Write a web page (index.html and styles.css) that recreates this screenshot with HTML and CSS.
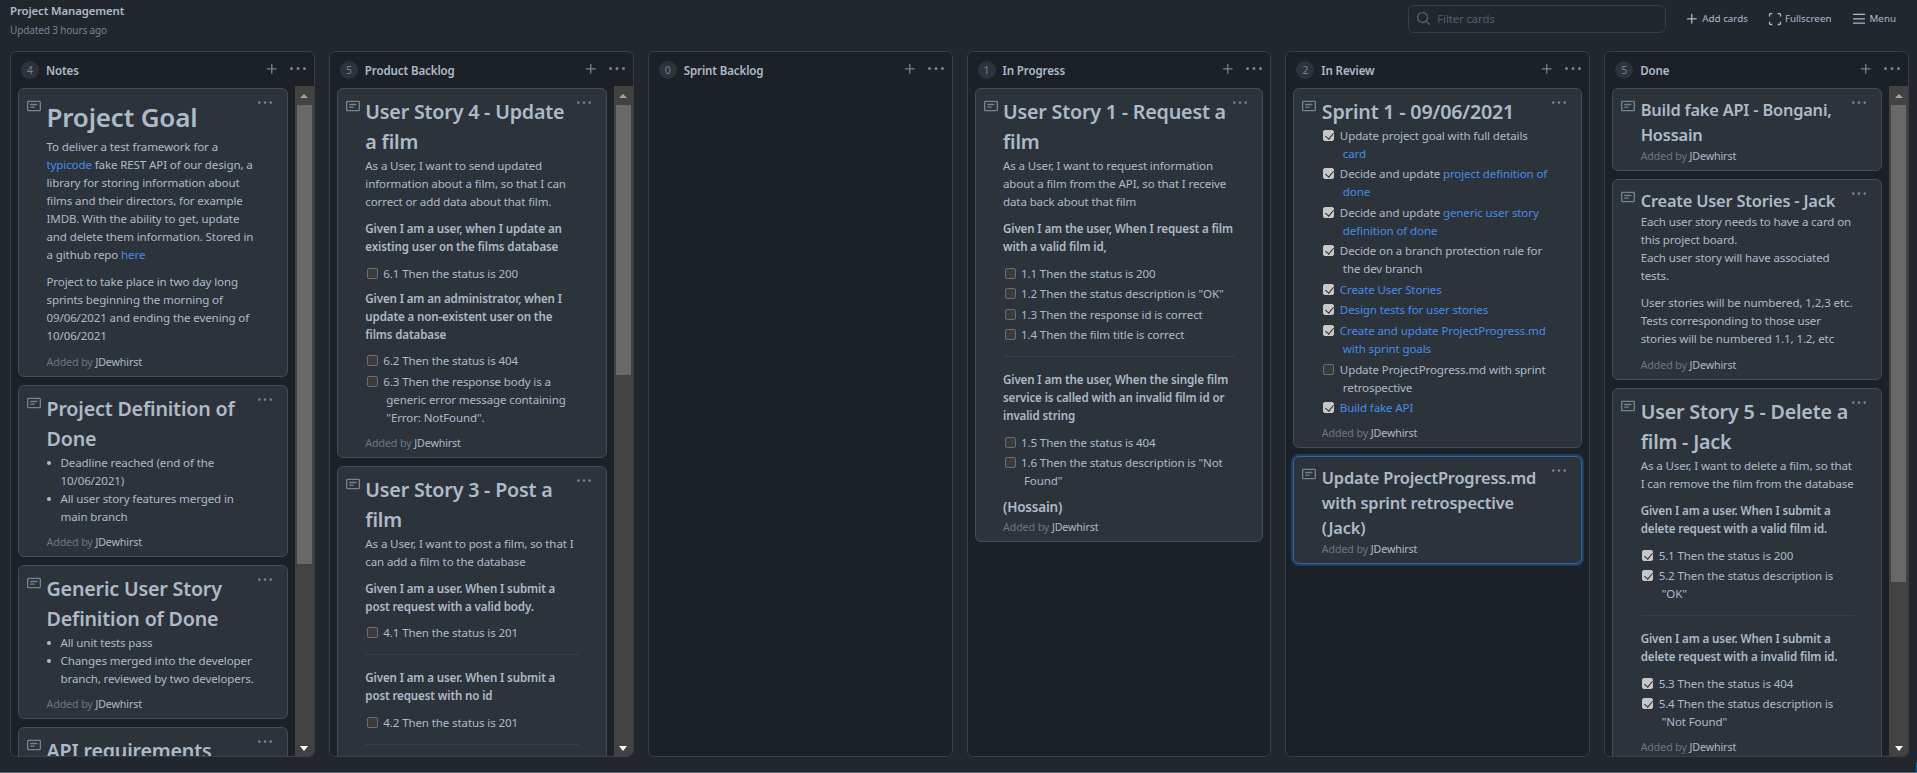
FILE: index.html
```html
<!DOCTYPE html>
<html lang="en">
<head>
<meta charset="utf-8">
<title>Project Management</title>
<link rel="stylesheet" href="styles.css">
</head>
<body>
<svg class="defs" width="0" height="0" aria-hidden="true">
  <symbol id="i-note" viewBox="0 0 16 16"><path fill-rule="evenodd" d="M0 3.75C0 2.784.784 2 1.75 2h12.5c.966 0 1.75.784 1.75 1.75v8.5A1.75 1.75 0 0114.25 14H1.75A1.75 1.75 0 010 12.25v-8.5zm1.75-.25a.25.25 0 00-.25.25v8.5c0 .138.112.25.25.25h12.5a.25.25 0 00.25-.25v-8.5a.25.25 0 00-.25-.25H1.75zM3.5 6.25a.75.75 0 01.75-.75h7a.75.75 0 010 1.5h-7a.75.75 0 01-.75-.75zm.75 2.25a.75.75 0 000 1.5h4a.75.75 0 000-1.5h-4z"/></symbol>
  <symbol id="i-plus" viewBox="0 0 16 16"><path fill-rule="evenodd" d="M7.75 2a.75.75 0 01.75.75V7h4.25a.75.75 0 110 1.5H8.5v4.25a.75.75 0 11-1.5 0V8.5H2.75a.75.75 0 010-1.5H7V2.75A.75.75 0 017.75 2z"/></symbol>
  <symbol id="i-kebab" viewBox="0 0 16 16"><path d="M8 9a1.5 1.5 0 100-3 1.5 1.5 0 000 3zM1.5 9a1.5 1.5 0 100-3 1.5 1.5 0 000 3zm13 0a1.5 1.5 0 100-3 1.5 1.5 0 000 3z"/></symbol>
  <symbol id="i-search" viewBox="0 0 16 16"><path fill-rule="evenodd" d="M11.5 7a4.499 4.499 0 11-8.998 0A4.499 4.499 0 0111.5 7zm-.82 4.74a6 6 0 111.06-1.06l3.04 3.04a.75.75 0 11-1.06 1.06l-3.04-3.04z"/></symbol>
  <symbol id="i-full" viewBox="0 0 16 16"><path d="M1 5V2.75C1 1.78 1.78 1 2.75 1H5v1.5H2.75a.25.25 0 00-.25.25V5H1zm10-4h2.25C14.22 1 15 1.78 15 2.75V5h-1.5V2.75a.25.25 0 00-.25-.25H11V1zM1 11h1.5v2.25c0 .14.11.25.25.25H5V15H2.75A1.75 1.75 0 011 13.25V11zm12.5 0H15v2.25A1.75 1.75 0 0113.25 15H11v-1.5h2.25a.25.25 0 00.25-.25V11z"/></symbol>
  <symbol id="i-bars" viewBox="0 0 16 16"><path fill-rule="evenodd" d="M1 2.75A.75.75 0 011.75 2h12.5a.75.75 0 110 1.5H1.75A.75.75 0 011 2.75zm0 5A.75.75 0 011.75 7h12.5a.75.75 0 110 1.5H1.75A.75.75 0 011 7.75zM1.75 12a.75.75 0 100 1.5h12.5a.75.75 0 100-1.5H1.75z"/></symbol>
</svg>

<header class="topbar">
  <div class="project">
    <div class="project-name">Project Management</div>
    <div class="project-updated">Updated 3 hours ago</div>
  </div>
  <div class="tools">
    <label class="filter">
      <svg class="ico ico-search"><use href="#i-search"/></svg>
      <span class="filter-text">Filter cards</span>
    </label>
    <a class="tool"><svg class="ico ico-add"><use href="#i-plus"/></svg>Add cards</a>
    <a class="tool"><svg class="ico ico-full"><use href="#i-full"/></svg>Fullscreen</a>
    <a class="tool"><svg class="ico ico-menu"><use href="#i-bars"/></svg>Menu</a>
  </div>
</header>

<main class="board">

  <section class="column">
    <header class="col-head">
      <span class="count">4</span><h2 class="col-title">Notes</h2>
      <svg class="ico col-add"><use href="#i-plus"/></svg><svg class="ico col-more"><use href="#i-kebab"/></svg>
    </header>
    <div class="col-body">
      <div class="cards">
        <article class="card">
          <svg class="ico card-note"><use href="#i-note"/></svg><svg class="ico card-more"><use href="#i-kebab"/></svg>
          <h1>Project Goal</h1>
          <p>To deliver a test framework for a <a>typicode</a> fake REST API of our design, a library for storing information about films and their directors, for example IMDB. With the ability to get, update and delete them information. Stored in a github repo <a>here</a></p>
          <p>Project to take place in two day long sprints beginning the morning of 09/06/2021 and ending the evening of 10/06/2021</p>
          <div class="added">Added by <b>JDewhirst</b></div>
        </article>
        <article class="card">
          <svg class="ico card-note"><use href="#i-note"/></svg><svg class="ico card-more"><use href="#i-kebab"/></svg>
          <h2>Project Definition of Done</h2>
          <ul class="bullets"><li>Deadline reached (end of the 10/06/2021)</li><li>All user story features merged in main branch</li></ul>
          <div class="added">Added by <b>JDewhirst</b></div>
        </article>
        <article class="card">
          <svg class="ico card-note"><use href="#i-note"/></svg><svg class="ico card-more"><use href="#i-kebab"/></svg>
          <h2>Generic User Story Definition of Done</h2>
          <ul class="bullets"><li>All unit tests pass</li><li>Changes merged into the developer branch, reviewed by two developers.</li></ul>
          <div class="added">Added by <b>JDewhirst</b></div>
        </article>
        <article class="card">
          <svg class="ico card-note"><use href="#i-note"/></svg><svg class="ico card-more"><use href="#i-kebab"/></svg>
          <h2>API requirements</h2>
        </article>
      </div>
      <div class="scrollbar"><span class="arrow-up"></span><span class="track"><span class="thumb thumb-notes"></span></span><span class="arrow-down"></span></div>
    </div>
  </section>

  <section class="column">
    <header class="col-head">
      <span class="count">5</span><h2 class="col-title">Product Backlog</h2>
      <svg class="ico col-add"><use href="#i-plus"/></svg><svg class="ico col-more"><use href="#i-kebab"/></svg>
    </header>
    <div class="col-body">
      <div class="cards">
        <article class="card">
          <svg class="ico card-note"><use href="#i-note"/></svg><svg class="ico card-more"><use href="#i-kebab"/></svg>
          <h2>User Story 4 - Update<br>a film</h2>
          <p>As a User, I want to send updated information about a film, so that I can correct or add data about that film.</p>
          <p><strong>Given I am a user, when I update an existing user on the films database</strong></p>
          <ul class="tasks"><li><input type="checkbox" disabled>6.1 Then the status is 200</li></ul>
          <p><strong>Given I am an administrator, when I update a non-existent user on the films database</strong></p>
          <ul class="tasks"><li><input type="checkbox" disabled>6.2 Then the status is 404</li><li><input type="checkbox" disabled>6.3 Then the response body is a generic error message containing "Error: NotFound".</li></ul>
          <div class="added">Added by <b>JDewhirst</b></div>
        </article>
        <article class="card">
          <svg class="ico card-note"><use href="#i-note"/></svg><svg class="ico card-more"><use href="#i-kebab"/></svg>
          <h2>User Story 3 - Post a film</h2>
          <p>As a User, I want to post a film, so that I can add a film to the database</p>
          <p><strong>Given I am a user. When I submit a post request with a valid body.</strong></p>
          <ul class="tasks"><li><input type="checkbox" disabled>4.1 Then the status is 201</li></ul>
          <hr>
          <p><strong>Given I am a user. When I submit a post request with no id</strong></p>
          <ul class="tasks"><li><input type="checkbox" disabled>4.2 Then the status is 201</li></ul>
          <hr>
        </article>
      </div>
      <div class="scrollbar"><span class="arrow-up"></span><span class="track"><span class="thumb thumb-backlog"></span></span><span class="arrow-down"></span></div>
    </div>
  </section>

  <section class="column">
    <header class="col-head">
      <span class="count">0</span><h2 class="col-title">Sprint Backlog</h2>
      <svg class="ico col-add"><use href="#i-plus"/></svg><svg class="ico col-more"><use href="#i-kebab"/></svg>
    </header>
    <div class="col-body"><div class="cards"></div></div>
  </section>

  <section class="column">
    <header class="col-head">
      <span class="count">1</span><h2 class="col-title">In Progress</h2>
      <svg class="ico col-add"><use href="#i-plus"/></svg><svg class="ico col-more"><use href="#i-kebab"/></svg>
    </header>
    <div class="col-body">
      <div class="cards">
        <article class="card">
          <svg class="ico card-note"><use href="#i-note"/></svg><svg class="ico card-more"><use href="#i-kebab"/></svg>
          <h2>User Story 1 - Request a film</h2>
          <p>As a User, I want to request information about a film from the API, so that I receive data back about that film</p>
          <p><strong>Given I am the user, When I request a film with a valid film id,</strong></p>
          <ul class="tasks"><li><input type="checkbox" disabled>1.1 Then the status is 200</li><li><input type="checkbox" disabled>1.2 Then the status description is "OK"</li><li><input type="checkbox" disabled>1.3 Then the response id is correct</li><li><input type="checkbox" disabled>1.4 Then the film title is correct</li></ul>
          <hr>
          <p><strong>Given I am the user, When the single film service is called with an invalid film id or invalid string</strong></p>
          <ul class="tasks"><li><input type="checkbox" disabled>1.5 Then the status is 404</li><li><input type="checkbox" disabled>1.6 Then the status description is "Not Found"</li></ul>
          <h4>(Hossain)</h4>
          <div class="added">Added by <b>JDewhirst</b></div>
        </article>
      </div>
    </div>
  </section>

  <section class="column">
    <header class="col-head">
      <span class="count">2</span><h2 class="col-title">In Review</h2>
      <svg class="ico col-add"><use href="#i-plus"/></svg><svg class="ico col-more"><use href="#i-kebab"/></svg>
    </header>
    <div class="col-body">
      <div class="cards">
        <article class="card">
          <svg class="ico card-note"><use href="#i-note"/></svg><svg class="ico card-more"><use href="#i-kebab"/></svg>
          <h2>Sprint 1 - 09/06/2021</h2>
          <ul class="tasks">
            <li><input type="checkbox" disabled checked>Update project goal with full details<br><a>card</a></li>
            <li><input type="checkbox" disabled checked>Decide and update <a>project definition of done</a></li>
            <li><input type="checkbox" disabled checked>Decide and update <a>generic user story definition of done</a></li>
            <li><input type="checkbox" disabled checked>Decide on a branch protection rule for the dev branch</li>
            <li><input type="checkbox" disabled checked><a>Create User Stories</a></li>
            <li><input type="checkbox" disabled checked><a>Design tests for user stories</a></li>
            <li><input type="checkbox" disabled checked><a>Create and update ProjectProgress.md with sprint goals</a></li>
            <li><input type="checkbox" disabled>Update ProjectProgress.md with sprint retrospective</li>
            <li><input type="checkbox" disabled checked><a>Build fake API</a></li>
          </ul>
          <div class="added">Added by <b>JDewhirst</b></div>
        </article>
        <article class="card card-focus">
          <svg class="ico card-note"><use href="#i-note"/></svg><svg class="ico card-more"><use href="#i-kebab"/></svg>
          <h3>Update ProjectProgress.md with sprint retrospective (Jack)</h3>
          <div class="added">Added by <b>JDewhirst</b></div>
        </article>
      </div>
    </div>
  </section>

  <section class="column">
    <header class="col-head">
      <span class="count">5</span><h2 class="col-title">Done</h2>
      <svg class="ico col-add"><use href="#i-plus"/></svg><svg class="ico col-more"><use href="#i-kebab"/></svg>
    </header>
    <div class="col-body">
      <div class="cards">
        <article class="card">
          <svg class="ico card-note"><use href="#i-note"/></svg><svg class="ico card-more"><use href="#i-kebab"/></svg>
          <h3>Build fake API - Bongani, Hossain</h3>
          <div class="added">Added by <b>JDewhirst</b></div>
        </article>
        <article class="card">
          <svg class="ico card-note"><use href="#i-note"/></svg><svg class="ico card-more"><use href="#i-kebab"/></svg>
          <h3>Create User Stories - Jack</h3>
          <p>Each user story needs to have a card on this project board.<br>Each user story will have associated tests.</p>
          <p>User stories will be numbered, 1,2,3 etc. Tests corresponding to those user stories will be numbered 1.1, 1.2, etc</p>
          <div class="added">Added by <b>JDewhirst</b></div>
        </article>
        <article class="card">
          <svg class="ico card-note"><use href="#i-note"/></svg><svg class="ico card-more"><use href="#i-kebab"/></svg>
          <h2>User Story 5 - Delete a film - Jack</h2>
          <p>As a User, I want to delete a film, so that<br>I can remove the film from the database</p>
          <p><strong>Given I am a user. When I submit a delete request with a valid film id.</strong></p>
          <ul class="tasks"><li><input type="checkbox" disabled checked>5.1 Then the status is 200</li><li><input type="checkbox" disabled checked>5.2 Then the status description is "OK"</li></ul>
          <hr>
          <p><strong>Given I am a user. When I submit a delete request with a invalid film id.</strong></p>
          <ul class="tasks"><li><input type="checkbox" disabled checked>5.3 Then the status is 404</li><li><input type="checkbox" disabled checked>5.4 Then the status description is "Not Found"</li></ul>
          <div class="added">Added by <b>JDewhirst</b></div>
        </article>
      </div>
      <div class="scrollbar"><span class="arrow-up"></span><span class="track"><span class="thumb thumb-done"></span></span><span class="arrow-down"></span></div>
    </div>
  </section>

</main>
</body>
</html>
```
FILE: styles.css
```css
* { box-sizing: border-box; }
html, body { margin: 0; height: 100%; }
body {
  position: relative;
  display: flex;
  flex-direction: column;
  height: 100vh;
  overflow: hidden;
  background: #22272e;
  color: #adbac7;
  font-family: "Noto Sans", "Open Sans", sans-serif;
  font-size: 11.55px;
  line-height: 18px;
  letter-spacing: -0.12px;
  border-bottom: 1px solid #5f666e;
}
body::after {
  content: "";
  position: absolute;
  right: 0;
  bottom: 0;
  width: 1px;
  height: 10px;
  background: #0b5f9c;
}
.defs { position: absolute; }
.ico { display: block; fill: currentColor; flex: none; }

/* top bar */
.topbar {
  flex: none;
  height: 51px;
  display: flex;
  justify-content: space-between;
  padding: 2px 21px 0 10px;
}
.project-name { font-weight: 600; color: #adbac7; line-height: 18px; font-size: 11.4px; }
.project-updated { font-size: 10px; color: #768390; line-height: 16px; margin-top: 2px; }
.tools { display: flex; align-items: center; height: 31px; margin-top: 1px; font-size: 9.8px; letter-spacing: 0; color: #adbac7; }
.filter {
  display: flex;
  align-items: center;
  width: 258px;
  height: 28px;
  padding-left: 7px;
  border: 1px solid #373e47;
  border-radius: 6px;
  margin-right: 19px;
}
.ico-search { width: 15px; height: 15px; color: #545d68; margin-right: 6px; }
.filter-text { color: #545d68; font-size: 11.4px; letter-spacing: -0.12px; }
.tool { display: flex; align-items: center; margin-right: 21px; }
.tool:last-child { margin-right: 0; }
.ico-add { width: 14px; height: 14px; margin-right: 3px; }
.ico-full { width: 14px; height: 14px; margin: 0 3px 0 -1px; }
.ico-menu { width: 14px; height: 14px; margin-right: 3px; }

/* board */
.board {
  flex: 1;
  min-height: 0;
  display: grid;
  grid-template-columns: repeat(6, 1fr);
  column-gap: 14px;
  padding: 0 8px 15px 10px;
}
.column {
  display: flex;
  flex-direction: column;
  min-width: 0;
  min-height: 0;
  background: #1c2128;
  border: 1px solid #373e47;
  border-radius: 6px;
  overflow: hidden;
}
.col-head {
  flex: none;
  height: 34px;
  display: flex;
  align-items: center;
  padding: 4px 8px 0 10px;
}
.count {
  width: 18px;
  height: 18px;
  margin-top: -3px;
  border-radius: 50%;
  background: #2d333b;
  color: #768390;
  font-size: 10.4px;
  line-height: 18px;
  text-align: center;
  margin-right: 7px;
}
.col-title { flex: 1; margin: 0; font-size: 11.55px; font-weight: 600; line-height: 18px; color: #adbac7; }
.col-add { width: 14px; height: 14px; margin: -5px 11px 0 0; color: #768390; }
.col-more { width: 16px; height: 16px; margin-top: -5px; color: #768390; }
.col-body { flex: 1; min-height: 0; display: flex; }
.cards { flex: 1; min-width: 0; padding: 2px 7px 0; overflow: hidden; }

/* custom scroll bar */
.scrollbar { flex: none; width: 19px; display: flex; flex-direction: column; align-items: center; background: #424242; }
.arrow-up, .arrow-down { flex: none; width: 0; height: 0; border-left: 4px solid transparent; border-right: 4px solid transparent; }
.arrow-up { border-bottom: 4px solid #a3a3a3; margin: 8px 0 7px; }
.arrow-down { border-top: 5px solid #fff; margin: 6px 0 5px; }
.track { flex: 1; width: 15px; }
.thumb { display: block; width: 100%; background: #686868; }
.thumb-notes { height: 459px; }
.thumb-backlog { height: 270px; }
.thumb-done { height: 477px; }

/* cards */
.card {
  position: relative;
  padding: 8px 27px 5px 27.5px;
  margin-bottom: 8px;
  background: #2d333b;
  border: 1px solid #444c56;
  border-radius: 6px;
}
.card-focus { border-color: #35659c; box-shadow: 0 0 0 2px #1c3f66; }
.card-note { position: absolute; left: 8px; top: 10px; width: 14px; height: 14px; color: #768390; }
.card-more { position: absolute; right: 15px; top: 7px; width: 14px; height: 14px; color: #768390; }
.card h1, .card h2, .card h3, .card h4 { margin: 0; font-weight: 600; color: #adbac7; letter-spacing: -0.2px; }
.card h1 { font-size: 26px; line-height: 40.5px; }
.card h2 { font-size: 19.7px; line-height: 30px; }
.card h3 { font-size: 16.4px; line-height: 25px; }
.card h4 { font-size: 13.5px; line-height: 21px; }
.card p { margin: 0 0 9px; }
.card p + .added { margin-top: -1px; }
.card a { color: #478be6; }
.card strong { font-weight: 600; }
.card hr { height: 1px; margin: 12px 0 14px; border: 0; background: #373e47; }
.card ul { margin: 0 0 7px; padding: 0; list-style: none; }
.card ul.bullets { padding-left: 14px; }
.card ul.bullets li { position: relative; }
.card ul.bullets li::before {
  content: "";
  position: absolute;
  left: -13.5px;
  top: 7px;
  width: 4px;
  height: 4px;
  border-radius: 50%;
  background: #adbac7;
}
.card ul.tasks { margin-top: -0.5px; }
.card ul.tasks li { padding-left: 21px; }
.card ul.tasks li + li { margin-top: 2.6px; }
.card ul.tasks input {
  appearance: none;
  position: relative;
  width: 11px;
  height: 11px;
  margin: 0 5.5px 0 -19.5px;
  vertical-align: -1px;
  background: #3b3b3b;
  border: 1px solid #6e6e6e;
  border-radius: 2px;
}
.card ul.tasks input:checked { background: #c8c8c8; border-color: #c8c8c8; }
.card ul.tasks input:checked::before {
  content: "";
  position: absolute;
  left: 2.5px;
  top: 0;
  width: 4px;
  height: 7px;
  border: solid #2a2a2a;
  border-width: 0 1.5px 1.5px 0;
  transform: rotate(40deg);
}
.added { color: #6a7681; line-height: 18px; font-size: 10.7px; }
.added b { font-weight: 400; color: #adbac7; }
```
